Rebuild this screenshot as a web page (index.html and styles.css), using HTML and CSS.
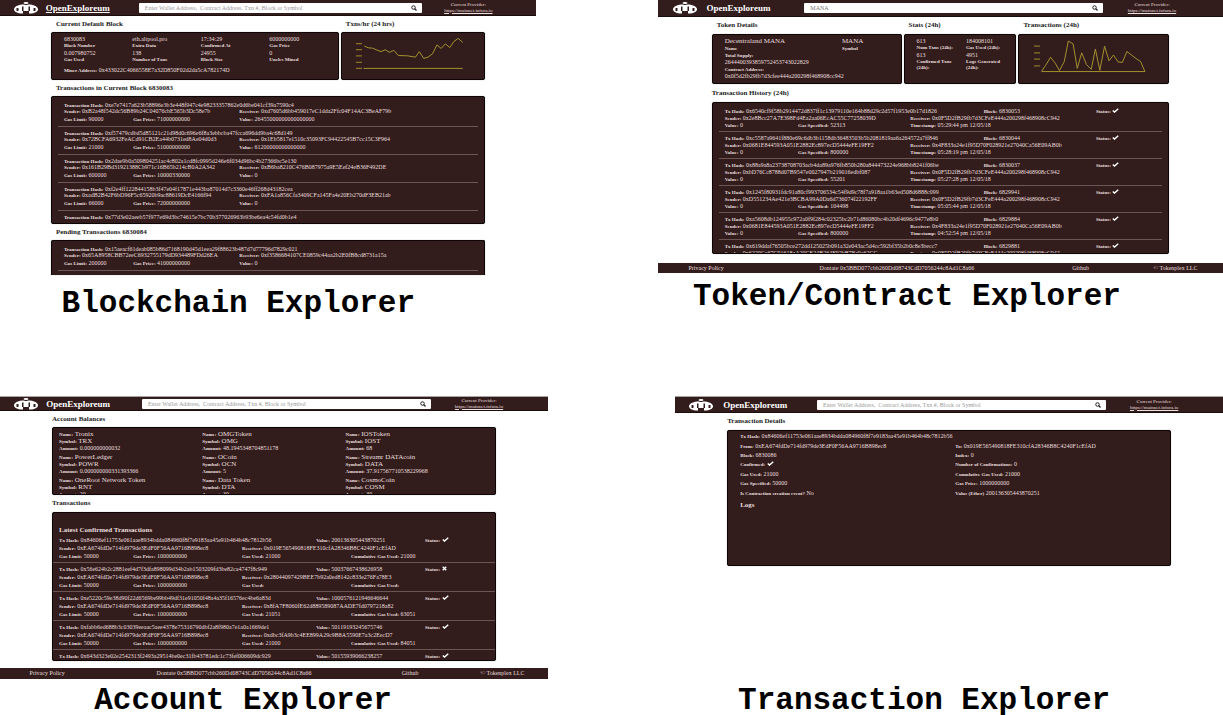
FILE: index.html
```html
<!DOCTYPE html>
<html lang="en">
<head>
<meta charset="utf-8">
<title>OpenExploreum</title>
<link rel="stylesheet" href="styles.css">
</head>
<body>
<svg class="defs" aria-hidden="true">
  <symbol id="logo" viewBox="0 0 24 12">
    <ellipse cx="12" cy="1" rx="2.500" ry="1" fill="#fff"/>
    <path d="M8 2.500H16C21 3 24 5 24 7.300C24 9.800 20.500 11.500 16 11.500H8C3.500 11.500 0 9.800 0 7.300C0 5 3 3 8 2.500Z" fill="#fff"/>
    <path d="M8 4.500H9.500V9H8ZM14.500 4.500H16V9H14.500ZM9 9H15V12H9Z" fill="#321c1c"/>
    <path d="M2.500 6H4.500V9H2.500ZM19.500 6H21.500V9H19.500Z" fill="#321c1c"/>
    <path d="M10.500 2H13.500V3H10.500Z" fill="#321c1c"/>
  </symbol>
  <symbol id="search" viewBox="0 0 12 12"><circle cx="5" cy="5" r="3.500" fill="none" stroke="#222" stroke-width="2"/><path d="M7.500 7.500L11 11" stroke="#222" stroke-width="2.400"/></symbol>
  <symbol id="check" viewBox="0 0 14 10"><path d="M1.500 5L5 8.200L12.500 1.500" fill="none" stroke="#fff" stroke-width="2.800"/></symbol>
  <symbol id="cross" viewBox="0 0 10 10"><path d="M1.500 1.500L8.500 8.500M8.500 1.500L1.500 8.500" fill="none" stroke="#fff" stroke-width="2.800"/></symbol>
</svg>
<main>
<div class="board">

<figure class="shot shot-block">
  <header class="topbar">
    <div class="brand"><svg class="logo"><use href="#logo"/></svg><a class="brand-name underlined" href="#">OpenExploreum</a></div>
    <form class="search"><input type="text" aria-label="Search blocks" placeholder="Enter Wallet Address,&nbsp; Contract Address, Txn #, Block or Symbol"><button type="button" aria-label="Search"><svg><use href="#search"/></svg></button></form>
    <div class="provider"><span>Current Provider:</span><a href="#">https://mainnet.infura.io</a></div>
  </header>
  <div class="content">
    <div class="cols block-cols">
      <section><h2>Current Default Block</h2>
        <div class="panel block-panel">
          <dl class="facts">
            <div><dd>6830083</dd><dt>Block Number</dt></div>
            <div><dd>eth.altpool.pro</dd><dt>Extra Data</dt></div>
            <div><dd>17:34:29</dd><dt>Confirmed At</dt></div>
            <div><dd>6000000000</dd><dt>Gas Price</dt></div>
            <div><dd>0.007980752</dd><dt>Gas Used</dt></div>
            <div><dd>138</dd><dt>Number of Txns</dt></div>
            <div><dd>24955</dd><dt>Block Size</dt></div>
            <div><dd>0</dd><dt>Uncles Mined</dt></div>
          </dl>
          <p class="miner"><b>Miner Address:</b> 0x433022C4066558E7a32D850F02d2da5cA782174D</p>
        </div>
      </section>
      <section><h2>Txns/hr (24 hrs)</h2>
        <div class="panel block-panel chart">
          <svg viewBox="0 0 431 143" role="img" aria-label="Transactions per hour">
            <path class="ticks" d="M38 33H57M38 52H57M38 71H57M38 91H57M38 110H57"/>
            <path class="plot" d="M64 40L76 46L89 47L116 58L129 52L142 60L156 54L170 70L199 71L223 75L235 58L249 79L262 75L276 65L290 37L303 48L316 34L330 45L343 26L356 17L370 29M62 110H370"/>
          </svg>
        </div>
      </section>
    </div>
    <h2>Transactions in Current Block 6830083</h2>
    <div class="panel list block-list">
      <div class="row"><p class="all"><b>Transaction Hash:</b> 0xe7e7417a623b58896e3b3e448f947c4e98233357862e0d6be041cf39a7590c4</p><p class="two"><b>Sender:</b> 0xB2a48f542dc56B89b24C04076cbE565b3Dc58e7b</p><p><b>Receiver:</b> 0xd7605d6bb459017eC1dda2Ffc04F14AC3BeAF79b</p><p><b>Gas Limit:</b> 90000</p><p><b>Gas Price:</b> 71000000000</p><p><b>Value:</b> 26455000000000000000</p></div>
      <div class="row"><p class="all"><b>Transaction Hash:</b> 0xf57479cdbd5d85121c21d98d0c696e6f8a3ebbcba47fcca696dd9ba4c68d149</p><p class="two"><b>Sender:</b> 0x72BCFA6932FeACd91CB2Ea44b0731ed8Ae04d0d3</p><p><b>Receiver:</b> 0x1Eb5817e1510c35093FC94422545B7cc15C3F964</p><p><b>Gas Limit:</b> 21000</p><p><b>Gas Price:</b> 51000000000</p><p><b>Value:</b> 61200000000000000</p></div>
      <div class="row"><p class="all"><b>Transaction Hash:</b> 0x2dae9b0a509804251ac4c802a1cd8fc0995d246e6f034d96bc4b27366bc5e130</p><p class="two"><b>Sender:</b> 0x161B29Bd31921388Cb971c16B65b214cB0A2A342</p><p><b>Receiver:</b> 0xB6ba8210C476B087975a9E5Eef24eB36F492DE</p><p><b>Gas Limit:</b> 600000</p><p><b>Gas Price:</b> 10000330000</p><p><b>Value:</b> 0</p></div>
      <div class="row"><p class="all"><b>Transaction Hash:</b> 0xf2e4ff122844158b3f47e04f17871e443ba87014d7c3360e46ff268d43182cea</p><p class="two"><b>Sender:</b> 0xadB2B42F6bD96F5c65920b9ac88619DcE4166f94</p><p><b>Receiver:</b> 0xFA1a856Cfa3409CFa145Fa4e20Eb270dF3EB21ab</p><p><b>Gas Limit:</b> 66000</p><p><b>Gas Price:</b> 72000000000</p><p><b>Value:</b> 0</p></div>
      <div class="row"><p class="all"><b>Transaction Hash:</b> 0x77d3e02aeeb57f977e69d3bc74615e7bc70b377026963b93be6ea4c54fd0b1e4</p></div>
    </div>
    <h2>Pending Transactions 6830084</h2>
    <div class="panel list pending-list">
      <div class="row"><p class="all"><b>Transaction Hash:</b> 0x15aeacf61deab085b86d7168190d45d1eea29f88623b487d7d77796d7829c021</p><p class="two"><b>Sender:</b> 0x65A8958CBB72eeC6932755179dD934489FDd26EA</p><p><b>Receiver:</b> 0xf3586684107CE0859c44aa2b2E0fB8cd8731a15a</p><p><b>Gas Limit:</b> 200000</p><p><b>Gas Price:</b> 41000000000</p><p><b>Value:</b> 0</p></div>
    </div>
  </div>
  <figcaption>Blockchain Explorer</figcaption>
</figure>

<figure class="shot shot-token">
  <header class="topbar">
    <div class="brand"><svg class="logo"><use href="#logo"/></svg><a class="brand-name" href="#">OpenExploreum</a></div>
    <form class="search"><input type="text" aria-label="Search tokens" value="MANA"><button type="button" aria-label="Search"><svg><use href="#search"/></svg></button></form>
    <div class="provider"><span>Current Provider:</span><a href="#">https://mainnet.infura.io</a></div>
  </header>
  <div class="content">
    <div class="cols token-cols">
      <section><h2>Token Details</h2>
        <div class="panel token-panel">
          <dl class="token-facts">
            <div><dd class="big">Decentraland MANA</dd><dt>Name</dt></div>
            <div><dd class="big">MANA</dd><dt>Symbol</dt></div>
            <div class="all"><dt>Total Supply:</dt><dd>2644400393859752453743022829</dd></div>
            <div class="all"><dt>Contract Address:</dt><dd>0x0f5d2fb29fb7d3cfee444a200298f468908cc942</dd></div>
          </dl>
        </div>
      </section>
      <section><h2>Stats (24h)</h2>
        <div class="panel token-panel">
          <dl class="stat-facts">
            <div><dd>613</dd><dt>Num Txns (24h):</dt></div>
            <div><dd>184008101</dd><dt>Gas Used (24h):</dt></div>
            <div><dd>613</dd><dt>Confirmed Txns<br>(24h):</dt></div>
            <div><dd>4951</dd><dt>Logs Generated<br>(24h):</dt></div>
          </dl>
        </div>
      </section>
      <section><h2>Transactions (24h)</h2>
        <div class="panel token-panel chart">
          <svg viewBox="0 0 454 151" role="img" aria-label="Token transactions">
            <path class="ticks" d="M40 35H59M40 56H59M40 76H59M40 97H59"/>
            <path class="plot" d="M64 114L77 95L92 70L107 89L120 112L135 84L148 19L163 28L176 105L190 56L205 93L220 108L233 44L247 111L262 35L276 81L290 63L305 85L318 86L332 52L361 74L375 83L389 115H64"/>
          </svg>
        </div>
      </section>
    </div>
    <h2 class="flush">Transaction History (24h)</h2>
    <div class="panel list token-list">
      <div class="row"><p class="hash"><b>Tx Hash:</b> 0x6540cf9f58b2914472d837ff1c13979110e164b88d29c2d57f1953e0b17d1826</p><p><b>Block:</b> 6830053</p><p><b>Status:</b> <svg class="mark"><use href="#check"/></svg></p><p class="two"><b>Sender:</b> 0x2e8Bcc27A7E398Fd4Ea2aa06EcAC55C77258039D</p><p class="rest"><b>Receiver:</b> 0x0F5D2fB29fb7d3CFeE444a200298f468908cC942</p><p><b>Value:</b> 0</p><p><b>Gas Specified:</b> 52313</p><p class="rest"><b>Timestamp:</b> 05:29:44 pm 12/05/18</p></div>
      <div class="row"><p class="hash"><b>Tx Hash:</b> 0xc5587a9641f880e69c6db3b1158db36483503b5b2081819aa6a264572a7ff846</p><p><b>Block:</b> 6830044</p><p><b>Status:</b> <svg class="mark"><use href="#check"/></svg></p><p class="two"><b>Sender:</b> 0x0681E844593A051E2882Ec897ecD5444eFE19FF2</p><p class="rest"><b>Receiver:</b> 0x4F833a24e1f95D70F028921e27040Ca56E09AB0b</p><p><b>Value:</b> 0</p><p><b>Gas Specified:</b> 800000</p><p class="rest"><b>Timestamp:</b> 05:28:19 pm 12/05/18</p></div>
      <div class="row"><p class="hash"><b>Tx Hash:</b> 0x88a9a8a23738708703acb4da89a976fb850b280a844473224e968bb8241f06be</p><p><b>Block:</b> 6830037</p><p><b>Status:</b> <svg class="mark"><use href="#check"/></svg></p><p class="two"><b>Sender:</b> 0xbD76Cc8788d07B9547e0027947b219016edbf087</p><p class="rest"><b>Receiver:</b> 0x0F5D2fB29fb7d3CFeE444a200298f468908cC942</p><p><b>Value:</b> 0</p><p><b>Gas Specified:</b> 55201</p><p class="rest"><b>Timestamp:</b> 05:27:28 pm 12/05/18</p></div>
      <div class="row"><p class="hash"><b>Tx Hash:</b> 0x1245f80931fdc91a80cf993706534c54f9d9c78f7a918aa1b63ed508d6888c099</p><p><b>Block:</b> 6829941</p><p><b>Status:</b> <svg class="mark"><use href="#check"/></svg></p><p class="two"><b>Sender:</b> 0xD551234Ae421e3BCBA99A0Da6d736074f22192FF</p><p class="rest"><b>Receiver:</b> 0x0F5D2fB29fb7d3CFeE444a200298f468908cC942</p><p><b>Value:</b> 0</p><p><b>Gas Specified:</b> 104498</p><p class="rest"><b>Timestamp:</b> 05:05:44 pm 12/05/18</p></div>
      <div class="row"><p class="hash"><b>Tx Hash:</b> 0xa5608db124955c972a0f9f284c02325bc2b71d86080bc4b20df4696c9477e8b0</p><p><b>Block:</b> 6829884</p><p><b>Status:</b> <svg class="mark"><use href="#check"/></svg></p><p class="two"><b>Sender:</b> 0x0681E844593A051E2882Ec897ecD5444eFE19FF2</p><p class="rest"><b>Receiver:</b> 0x4F833a24e1f95D70F028921e27040Ca56E09AB0b</p><p><b>Value:</b> 0</p><p><b>Gas Specified:</b> 800000</p><p class="rest"><b>Timestamp:</b> 04:52:54 pm 12/05/18</p></div>
      <div class="row"><p class="hash"><b>Tx Hash:</b> 0x619ddaf76505bce272dd125025b091a32e043ac5d4cc592bf35b2b0c8e3becc7</p><p><b>Block:</b> 6829881</p><p><b>Status:</b> <svg class="mark"><use href="#check"/></svg></p><p class="two"><b>Sender:</b> 0x6220Ca67C91618aA20CE24B264E92bB7Fa9e62CC</p><p class="rest"><b>Receiver:</b> 0x0F5D2fB29fb7d3CFeE444a200298f468908cC942</p></div>
    </div>
  </div>
  <footer class="footbar"><a href="#">Privacy Policy</a><span>Dontate 0x5BBD077cbb260Dd08743CdD7056244c8Ad1C8a66</span><a href="#">Github</a><span>© Tokenplex LLC</span></footer>
  <figcaption>Token/Contract Explorer</figcaption>
</figure>
</div>

<div class="board board-lower">
<figure class="shot shot-account">
  <header class="topbar">
    <div class="brand"><svg class="logo"><use href="#logo"/></svg><a class="brand-name" href="#">OpenExploreum</a></div>
    <form class="search"><input type="text" aria-label="Search accounts" placeholder="Enter Wallet Address,&nbsp; Contract Address, Txn #, Block or Symbol"><button type="button" aria-label="Search"><svg><use href="#search"/></svg></button></form>
    <div class="provider"><span>Current Provider:</span><a href="#">https://mainnet.infura.io</a></div>
  </header>
  <div class="content">
    <h2 class="flush">Account Balances</h2>
    <div class="panel balances">
      <div><p><b>Name:</b> <span class="big">Tronix</span></p><p><b>Symbol:</b> <span class="big">TRX</span></p><p><b>Amount:</b> 0.000000000032</p></div>
      <div><p><b>Name:</b> <span class="big">OMGToken</span></p><p><b>Symbol:</b> <span class="big">OMG</span></p><p><b>Amount:</b> 48.1945348704851178</p></div>
      <div><p><b>Name:</b> <span class="big">IOSToken</span></p><p><b>Symbol:</b> <span class="big">IOST</span></p><p><b>Amount:</b> 68</p></div>
      <div><p><b>Name:</b> <span class="big">PowerLedger</span></p><p><b>Symbol:</b> <span class="big">POWR</span></p><p><b>Amount:</b> 0.000000000331393366</p></div>
      <div><p><b>Name:</b> <span class="big">OCoin</span></p><p><b>Symbol:</b> <span class="big">OCN</span></p><p><b>Amount:</b> 5</p></div>
      <div><p><b>Name:</b> <span class="big">Streamr DATAcoin</span></p><p><b>Symbol:</b> <span class="big">DATA</span></p><p><b>Amount:</b> 37.917567710538229968</p></div>
      <div><p><b>Name:</b> <span class="big">OneRoot Network Token</span></p><p><b>Symbol:</b> <span class="big">RNT</span></p><p><b>Amount:</b> 20</p></div>
      <div><p><b>Name:</b> <span class="big">Data Token</span></p><p><b>Symbol:</b> <span class="big">DTA</span></p><p><b>Amount:</b> 30</p></div>
      <div><p><b>Name:</b> <span class="big">CosmoCoin</span></p><p><b>Symbol:</b> <span class="big">COSM</span></p><p><b>Amount:</b> 30</p></div>
    </div>
    <h2 class="flush second">Transactions</h2>
    <div class="panel list account-list">
      <h3>Latest Confirmed Transactions</h3>
      <div class="row"><p class="three"><b>Tx Hash:</b> 0x84606ef11753e061aae8934bdda084960f8f7e9183aa45e91b464b48c7812b56</p><p class="two"><b>Value:</b> 200136305443870251</p><p><b>Status:</b> <svg class="mark"><use href="#check"/></svg></p><p class="two"><b>Sender:</b> 0xEA674fdDe714fd979de3EdF0F56AA9716B898ec8</p><p class="rest"><b>Receiver:</b> 0x019E565490818FE310cfA28346B8C4240F1cEfAD</p><p><b>Gas Limit:</b> 50000</p><p><b>Gas Price:</b> 1000000000</p><p class="two"><b>Gas Used:</b> 21000</p><p class="two"><b>Cumulative Gas Used:</b> 21000</p></div>
      <div class="row"><p class="three"><b>Tx Hash:</b> 0x56e624b2c2881eef4d7f3dfa898099d34b2ab1503209fd3be82ca4747f8c949</p><p class="two"><b>Value:</b> 50037667438626958</p><p><b>Status:</b> <svg class="mark cross"><use href="#cross"/></svg></p><p class="two"><b>Sender:</b> 0xEA674fdDe714fd979de3EdF0F56AA9716B898ec8</p><p class="rest"><b>Receiver:</b> 0x28044097429BEE7b92a0ed8142c833e276Fa78E3</p><p><b>Gas Limit:</b> 50000</p><p><b>Gas Price:</b> 1000000000</p><p class="two"><b>Gas Used:</b></p><p class="two"><b>Cumulative Gas Used:</b></p></div>
      <div class="row"><p class="three"><b>Tx Hash:</b> 0xe5220c59e38d90f22d6569be99bb49df31e91050f48a4a35f16576ec4be6a83d</p><p class="two"><b>Value:</b> 1000576121946646644</p><p><b>Status:</b> <svg class="mark"><use href="#check"/></svg></p><p class="two"><b>Sender:</b> 0xEA674fdDe714fd979de3EdF0F56AA9716B898ec8</p><p class="rest"><b>Receiver:</b> 0x8fA7F8060fE62d889589087AADE7fd0797218a82</p><p><b>Gas Limit:</b> 50000</p><p><b>Gas Price:</b> 1000000000</p><p class="two"><b>Gas Used:</b> 21051</p><p class="two"><b>Cumulative Gas Used:</b> 63051</p></div>
      <div class="row"><p class="three"><b>Tx Hash:</b> 0xfabb6ed688b3c03039eeaac5aee4378e75316790dbf2a8f980a7e1a0a1669de1</p><p class="two"><b>Value:</b> 50119193245675746</p><p><b>Status:</b> <svg class="mark"><use href="#check"/></svg></p><p class="two"><b>Sender:</b> 0xEA674fdDe714fd979de3EdF0F56AA9716B898ec8</p><p class="rest"><b>Receiver:</b> 0xdbc3fA9b3c4EE899A29c9B8A5590E7a3c2EecD7</p><p><b>Gas Limit:</b> 50000</p><p><b>Gas Price:</b> 1000000000</p><p class="two"><b>Gas Used:</b> 21000</p><p class="two"><b>Cumulative Gas Used:</b> 84051</p></div>
      <div class="row"><p class="three"><b>Tx Hash:</b> 0x643d323e02e2542313f2493a29514be0ec31fb43781edc1c73fef006609dc929</p><p class="two"><b>Value:</b> 50155939066238257</p><p><b>Status:</b> <svg class="mark"><use href="#check"/></svg></p></div>
    </div>
  </div>
  <footer class="footbar"><a href="#">Privacy Policy</a><span>Dontate 0x5BBD077cbb260Dd08743CdD7056244c8Ad1C8a66</span><a href="#">Github</a><span>© Tokenplex LLC</span></footer>
  <figcaption>Account Explorer</figcaption>
</figure>

<figure class="shot shot-tx">
  <header class="topbar">
    <div class="brand"><svg class="logo"><use href="#logo"/></svg><a class="brand-name" href="#">OpenExploreum</a></div>
    <form class="search"><input type="text" aria-label="Search transactions" placeholder="Enter Wallet Address,&nbsp; Contract Address, Txn #, Block or Symbol"><button type="button" aria-label="Search"><svg><use href="#search"/></svg></button></form>
    <div class="provider"><span>Current Provider:</span><a href="#">https://mainnet.infura.io</a></div>
  </header>
  <div class="content">
    <h2 class="flush">Transaction Details</h2>
    <div class="panel tx-panel">
      <div class="tx-grid">
        <p class="all"><b>Tx Hash:</b> 0x84606ef11753e061aae8934bdda084960f8f7e9183aa45e91b464b48c7812b56</p>
        <p><b>From:</b> 0xEA674fdDe714fd979de3EdF0F56AA9716B898ec8</p><p><b>To:</b> 0x019E565490818FE310cfA28346B8C4240F1cEfAD</p>
        <p><b>Block:</b> 6830086</p><p><b>Index:</b> 0</p>
        <p><b>Confirmed:</b> <svg class="mark"><use href="#check"/></svg></p><p><b>Number of Confirmations:</b> 0</p>
        <p><b>Gas Used:</b> 21000</p><p><b>Cumulative Gas Used:</b> 21000</p>
        <p><b>Gas Specified:</b> 50000</p><p><b>Gas Price:</b> 1000000000</p>
        <p><b>Is Contraction creation event?</b> No</p><p><b>Value (Ether)</b> 200136305443870251</p>
      </div>
      <h3>Logs</h3>
    </div>
  </div>
  <figcaption>Transaction Explorer</figcaption>
</figure>
</div>
</main>
</body>
</html>
```
FILE: styles.css
```css
* { box-sizing: border-box; margin: 0; padding: 0; }
body { background: #fff; color: #eadfdf; font: 6px/7px "Liberation Serif", serif; }
.defs { display: none; }
svg { display: block; }
a { color: inherit; text-decoration: none; }

.board { display: flex; justify-content: space-between; }
.board-lower { margin-top: 78px; }
.shot { display: flex; flex-direction: column; width: 44.8%; }
.shot-block { width: 43.8%; }
.shot-token { width: 46.2%; }

.topbar { display: grid; grid-template-columns: 25.9% 52.8% 1fr; align-items: center; height: 17px; background: #321c1c; border-bottom: 1px solid #1c0d0d; }
.shot-block .topbar { height: 16px; }
.shot-account .topbar { height: 15px; }
.board-lower .topbar { border-top: 1px solid #aaa3a3; }
.brand { display: flex; align-items: center; gap: 8px; padding-left: 10%; }
.shot-token .brand, .shot-tx .brand { gap: 10px; }
.logo { width: 24px; height: 12px; }
.brand-name { color: #fff; font-size: 9px; line-height: 12px; font-weight: bold; }
.underlined { text-decoration: underline; }
.search { display: flex; height: 10px; background: #fff; border-radius: 1px; }
.search input { flex: 1; min-width: 0; padding: 0 6px; border: 0; background: none; font: 6px/8px "Liberation Serif", serif; color: #777; }
.search input::placeholder { color: #999; }
.search button { display: flex; align-items: center; width: 11px; border: 0; background: none; }
.search button svg { width: 6px; height: 6px; }
.provider { display: flex; flex-direction: column; align-items: center; padding-right: 18%; font-size: 5px; line-height: 6px; }
.provider a { text-decoration: underline; }

.content { margin: 0 9.5%; }
h2 { padding-left: 5px; color: #222; font-size: 7px; line-height: 16px; }
h2.flush { padding-left: 0; }
.shot-token h2 { line-height: 17px; }
.shot-token h2.flush { line-height: 18px; }
.shot-tx h2, h2.second { line-height: 17px; }
.panel { overflow: hidden; background: #321c1c; border: 1px solid #0d0505; border-radius: 2px; box-shadow: 0 0 1px #888; }
.cols { display: grid; gap: 2px; }
.block-cols { grid-template-columns: 2fr 1fr; }
.token-cols { grid-template-columns: 190fr 113fr 151fr; }
b, dt { font-size: 5px; font-weight: bold; }
.big { font-size: 7px; }
p, dd { white-space: nowrap; }
.all { grid-column: 1 / -1; }
.two { grid-column: span 2; }
.three, .hash { grid-column: span 3; }
.chart svg { width: 100%; height: 100%; }
.plot { fill: none; stroke: #a8962e; stroke-width: 3; }
.ticks { fill: none; stroke: #8a7526; stroke-width: 4; }

.block-panel { height: 48px; padding-top: 3px; }
.chart.block-panel, .chart.token-panel { padding: 0; }
.facts { display: grid; grid-template-columns: repeat(4, 1fr); gap: 1px 0; padding-left: 12px; }
.facts dt { line-height: 6px; }
.miner { padding: 3px 12px; line-height: 8px; }

.token-panel { height: 50px; padding: 3px 0 0 12px; }
.token-facts { display: grid; grid-template-columns: 2fr 1fr; gap: 1px 0; }
.token-facts .all dt { line-height: 6px; }
.stat-facts { display: grid; grid-template-columns: 1fr 1fr; gap: 1px 0; }
.stat-facts dt { line-height: 6px; }

.row { display: grid; border-bottom: 1px solid #6b5555; }
.block-list { height: 128px; padding: 2px 6px 0; }
.pending-list { height: 35px; padding: 2px 6px 0; border-bottom: 0; border-radius: 2px 2px 0 0; }
.block-list .row, .pending-list .row { grid-template-columns: 17% 26% 1fr; grid-template-rows: 6px 7px 8px; padding: 3px 6px; }
.block-list .row p, .pending-list .row p { align-self: center; }
.token-list { height: 152px; padding: 2px 6px 0; }
.token-list .row { grid-template-columns: 17% 26% 17% 26% 1fr; padding: 3px 6px 2px; }
.rest { grid-column-end: -1; grid-column-start: 3; }
.balances { display: grid; grid-template-columns: repeat(3, 1fr); gap: 2px 0; align-content: start; height: 68px; padding: 3px 6px 0; }
.account-list { height: 149px; padding-top: 13px; }
.account-list .row { grid-template-columns: 17% 25% 17% 8% 17% 1fr; grid-auto-rows: 8px; padding: 2px 0 2px 6px; line-height: 8px; }
.account-list .row b { line-height: 6px; }
.account-list h3 { padding-left: 6px; }
h3 { font-size: 7px; line-height: 8px; }
.mark { display: inline-block; width: 7px; height: 5px; }
.mark.cross { width: 5px; }

.tx-panel { height: 136px; padding: 1px 12px; }
.tx-grid { display: grid; grid-template-columns: 51.500% 1fr; grid-auto-rows: 1fr; align-items: center; height: 66px; }
.tx-panel h3 { padding-top: 3px; }

.footbar { display: grid; grid-template-columns: 24.5% 47.3% 15.2% 1fr; align-items: center; height: 11px; margin-top: 7px; padding-left: 5.4%; background: #321c1c; }
.shot-token .footbar { height: 10px; margin-top: 9px; }

figcaption { padding-left: 11.5%; color: #000; font: bold 31px/28px "Liberation Mono", monospace; white-space: nowrap; margin-top: 15px; }
.shot-token figcaption { margin-top: 10px; padding-left: 6.2%; }
.shot-account figcaption { margin-top: 8px; padding-left: 17.2%; }
.shot-tx figcaption { margin-top: auto; padding-left: 11.5%; }
```
